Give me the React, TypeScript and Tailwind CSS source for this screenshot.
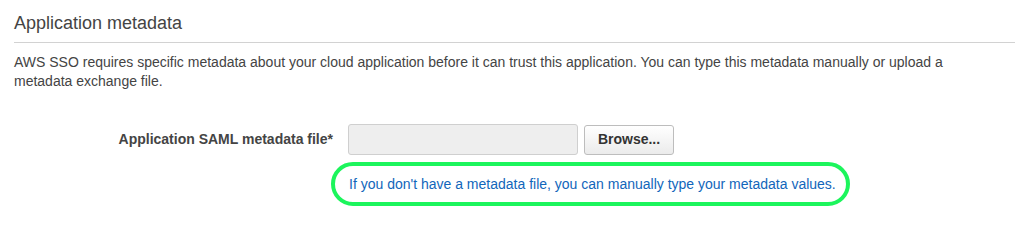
export default function App() {
  return (
    <div
      className="bg-white w-[1029px] h-[239px] pl-[14px] pr-[14px] pt-[11px] text-[#444]"
      style={{ fontFamily: '"Liberation Sans", Arial, sans-serif' }}
    >
      <h2 className="text-[18px] leading-[24px] font-normal pb-[7px] border-b border-[#d2d2d2]">
        Application metadata
      </h2>
      <p className="text-[14px] leading-[19px] mt-[10px] pr-[30px]">
        AWS SSO requires specific metadata about your cloud application before it can trust this
        application. You can type this metadata manually or upload a metadata exchange file.
      </p>

      <div className="flex items-center mt-[33px]">
        <label className="w-[319px] text-right text-[14px] font-bold text-[#444]">
          Application SAML metadata file*
        </label>
        <input
          type="text"
          className="ml-[15px] w-[230px] h-[31px] rounded-[3px] border border-[#cfcfcf] bg-[#eeeeee]"
        />
        <button className="ml-[6px] w-[90px] h-[30px] rounded-[3px] border border-[#bdbdbd] bg-gradient-to-b from-white to-[#ebebeb] text-[14px] font-bold text-[#333]">
          Browse...
        </button>
      </div>

      <div className="mt-[7px] ml-[317px] inline-flex rounded-[22px] border-[4px] border-[#1cf55c] pl-[14px] pr-[10px] h-[44px] items-center">
        <a href="#" className="text-[14px] text-[#1166bb]">
          If you don't have a metadata file, you can manually type your metadata values.
        </a>
      </div>
    </div>
  );
}
